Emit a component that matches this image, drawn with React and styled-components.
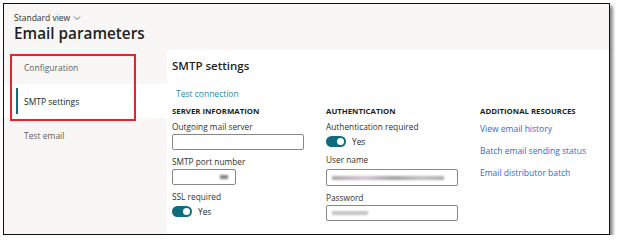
import React from "react";
import styled, { createGlobalStyle } from "styled-components";

const GlobalStyle = createGlobalStyle`
  html, body {
    margin: 0;
    padding: 0;
    background: #ffffff;
  }
  body {
    font-family: "Open Sans", "Noto Sans", sans-serif;
    color: #201f1e;
  }
  * { box-sizing: border-box; }
`;

const navItems = [
  { id: 0, text: "Configuration" },
  { id: 1, text: "SMTP settings", active: true },
  { id: 2, text: "Test email" },
];

const resources = [
  "View email history",
  "Batch email sending status",
  "Email distributor batch",
];

export default function App() {
  return (
    <>
      <GlobalStyle />
      <Frame>
        <Header>
          <ViewPicker>
            Standard view
            <svg width="8" height="6" viewBox="0 0 8 6">
              <path d="M1 1.5 L4 4.5 L7 1.5" fill="none" stroke="#605e5c" strokeWidth="0.9" />
            </svg>
          </ViewPicker>
          <Title>Email parameters</Title>
        </Header>

        <Body>
          <Nav>
            {navItems.map(({ id, text, active }) => (
              <NavItem key={id} $active={active}>
                {text}
              </NavItem>
            ))}
          </Nav>
          <Callout />

          <Main>
            <Heading>SMTP settings</Heading>
            <ActionLink>Test connection</ActionLink>

            <Columns>
              <Column>
                <SectionHead>Server information</SectionHead>
                <Field>
                  <Label>Outgoing mail server</Label>
                  <Input $width={132} />
                </Field>
                <Field>
                  <Label>SMTP port number</Label>
                  <Input $width={64}>
                    <Smudge $w={8} $right color="#6b6b6b" />
                  </Input>
                </Field>
                <Field>
                  <Label>SSL required</Label>
                  <ToggleRow>
                    <Toggle />
                    Yes
                  </ToggleRow>
                </Field>
              </Column>

              <Column>
                <SectionHead>Authentication</SectionHead>
                <Field>
                  <Label>Authentication required</Label>
                  <ToggleRow>
                    <Toggle />
                    Yes
                  </ToggleRow>
                </Field>
                <Field $gap={3}>
                  <Label>User name</Label>
                  <Input $width={132} $height={17}>
                    <Smudge $w={112} color="linear-gradient(90deg,#9a9a9a,#c9b9c9 30%,#8f8f8f 55%,#b5b5b5 80%,#9f9f9f)" />
                  </Input>
                </Field>
                <Field>
                  <Label>Password</Label>
                  <Input $width={132} $height={16}>
                    <Smudge $w={36} color="#b9b9b9" />
                  </Input>
                </Field>
              </Column>

              <Column $gap={8}>
                <SectionHead $after={-4}>Additional resources</SectionHead>
                {resources.map((r) => (
                  <ResourceLink key={r}>{r}</ResourceLink>
                ))}
              </Column>
            </Columns>
          </Main>
        </Body>
      </Frame>
    </>
  );
}

const Frame = styled.div`
  margin: 3px 0 0 3px;
  width: 607px;
  height: 232px;
  border: 1.5px solid #111111;
  box-shadow: 3px 3px 3px rgba(0, 0, 0, 0.45);
  display: flex;
  flex-direction: column;
  background: #f8f7f6;
`;

const Header = styled.div`
  height: 46px;
  padding: 7px 0 0 10px;
  display: flex;
  flex-direction: column;
`;

const ViewPicker = styled.div`
  display: flex;
  align-items: center;
  gap: 3px;
  font-size: 8.5px;
  line-height: 13px;
  color: #323130;
`;

const Title = styled.h1`
  margin: 0;
  font-size: 15.3px;
  line-height: 19px;
  font-weight: 600;
  color: #201f1e;
`;

const Body = styled.div`
  position: relative;
  flex: 1;
  display: flex;
  min-height: 0;
`;

const Nav = styled.nav`
  width: 163px;
  flex-shrink: 0;
  display: flex;
  flex-direction: column;
`;

const NavItem = styled.div`
  position: relative;
  height: 34px;
  display: flex;
  align-items: center;
  padding-left: 20px;
  font-size: 8.5px;
  color: ${(p) => (p.$active ? "#201f1e" : "#605e5c")};
  background: ${(p) => (p.$active ? "#ffffff" : "transparent")};

  &::before {
    content: "";
    display: ${(p) => (p.$active ? "block" : "none")};
    position: absolute;
    left: 12px;
    top: 4px;
    bottom: 4px;
    width: 2px;
    background: #0f6c7d;
  }
`;

const Callout = styled.div`
  position: absolute;
  left: 6px;
  top: 4px;
  width: 126px;
  height: 67px;
  border: 2px solid #e8242a;
  pointer-events: none;
`;

const Main = styled.main`
  flex: 1;
  min-width: 0;
  overflow: hidden;
  background: #ffffff;
  padding: 7px 0 0 5px;
  display: flex;
  flex-direction: column;
`;

const Heading = styled.h2`
  margin: 0;
  font-size: 11.5px;
  line-height: 18px;
  font-weight: 600;
  color: #201f1e;
`;

const ActionLink = styled.a`
  margin: 12px 0 0 4px;
  font-size: 8.5px;
  line-height: 14px;
  color: #2a8aa3;
`;

const Columns = styled.div`
  margin-top: 3px;
  display: grid;
  grid-template-columns: repeat(3, 154px);
`;

const Column = styled.div`
  display: flex;
  flex-direction: column;
  gap: ${(p) => p.$gap ?? 5}px;
`;

const SectionHead = styled.div`
  font-size: 7.8px;
  line-height: 14px;
  font-weight: 700;
  text-transform: uppercase;
  color: #201f1e;
  margin-bottom: ${(p) => p.$after ?? -3}px;
`;

const Field = styled.div`
  display: flex;
  flex-direction: column;
  gap: ${(p) => p.$gap ?? 1}px;
`;

const Label = styled.label`
  font-size: 8.3px;
  line-height: 13px;
  color: #323130;
`;

const Input = styled.div`
  width: ${(p) => p.$width}px;
  height: ${(p) => p.$height ?? 16}px;
  border: 1px solid #8a8886;
  border-radius: 2px;
  background: #ffffff;
  display: flex;
  align-items: center;
  padding: 0 5px;
`;

const Smudge = styled.span`
  display: block;
  margin-left: ${(p) => (p.$right ? "auto" : "0")};
  margin-right: ${(p) => (p.$right ? "2px" : "0")};
  width: ${(p) => p.$w}px;
  height: 4px;
  background: ${(p) => p.color};
  filter: blur(0.8px);
  opacity: 0.85;
`;

const ToggleRow = styled.div`
  display: flex;
  align-items: center;
  gap: 6px;
  height: 14px;
  font-size: 8.3px;
  color: #201f1e;
`;

const Toggle = styled.span`
  position: relative;
  width: 20px;
  height: 11px;
  border-radius: 6px;
  background: #0f6c7d;

  &::after {
    content: "";
    position: absolute;
    right: 2px;
    top: 2px;
    width: 7px;
    height: 7px;
    border-radius: 50%;
    background: #ffffff;
  }
`;

const ResourceLink = styled.a`
  font-size: 8.5px;
  line-height: 14px;
  color: #2f6bd1;
`;
